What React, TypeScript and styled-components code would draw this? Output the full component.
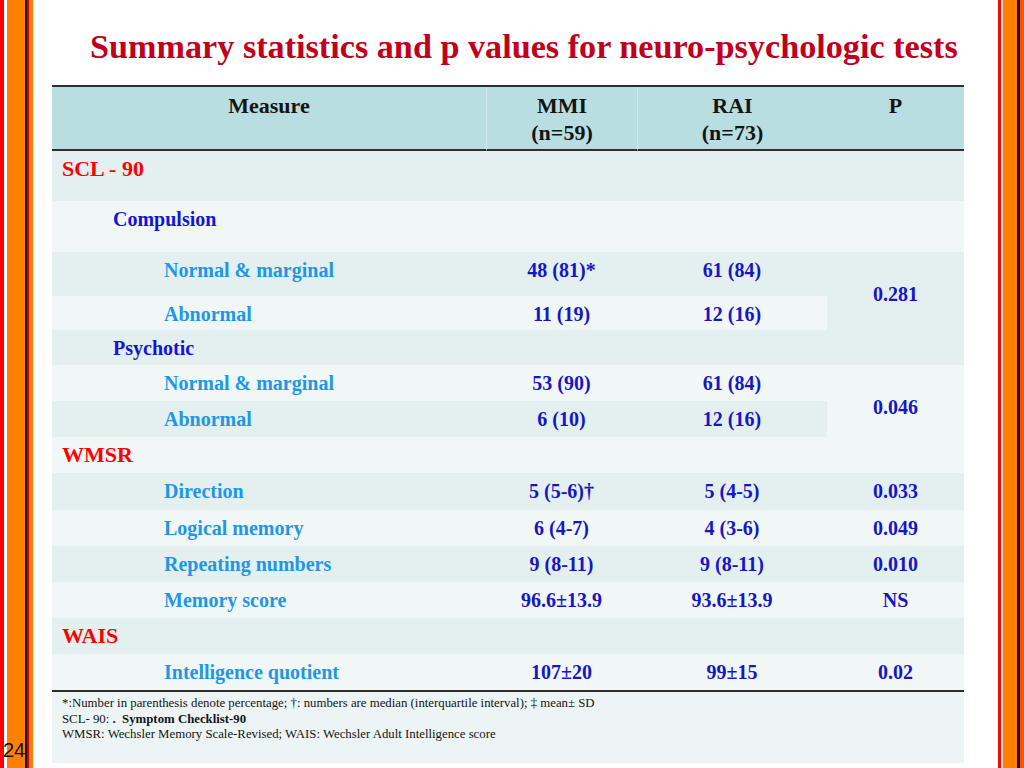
import React from 'react';
import styled, { createGlobalStyle } from 'styled-components';

const Global = createGlobalStyle`
  html, body { margin: 0; padding: 0; background: #ffffff; }
  body { font-family: "Liberation Serif", "Times New Roman", serif; }
  * { box-sizing: border-box; }
`;

const Slide = styled.div`
  position: relative;
  display: flex;
  width: 1024px;
  height: 768px;
  overflow: hidden;
  background: #ffffff;
`;

const LeftBorder = styled.div`
  flex: 0 0 33px;
  background: linear-gradient(
    to right,
    #ff0000 0 4px,
    #ffffff 4px 7px,
    #ff8000 7px 25px,
    #141414 25px 27px,
    #d40000 27px 29px,
    #ff8000 29px 33px
  );
`;

const RightBorder = styled.div`
  flex: 0 0 26px;
  background: linear-gradient(
    to right,
    #e3120b 0 3px,
    #ffd9cf 3px 5px,
    #ff8000 5px 19px,
    #141414 19px 22px,
    #ff5200 22px 26px
  );
`;

const Main = styled.main`
  flex: 1;
  display: flex;
  flex-direction: column;
  padding: 0 34px 0 19px;
`;

const Title = styled.h1`
  margin: 27px 0 0 38px;
  font-size: 34.2px;
  line-height: 40px;
  font-weight: bold;
  color: #c0001c;
  white-space: nowrap;
`;

const Table = styled.div`
  margin-top: 18px;
  display: grid;
  width: 912px;
  grid-template-columns: 434px 151px 190px 137px;
  border-top: 2px solid #2e2e2e;
`;

const HeadCell = styled.div<{ $divider?: boolean }>`
  height: 64px;
  padding-top: 5px;
  background: #b9dee1;
  border-bottom: 2px solid #2e2e2e;
  border-left: ${(p) => (p.$divider ? '1px solid #cfe9eb' : 'none')};
  font-size: 22px;
  line-height: 27px;
  font-weight: bold;
  color: #141414;
  text-align: center;
`;

type Band = 'dark' | 'light';
type Kind = 'section' | 'sub' | 'item';

const bandColor = (b: Band) => (b === 'dark' ? '#e4eff0' : '#f1f6f7');

const kindColor: Record<Kind, string> = {
  section: '#ff0000',
  sub: '#1414d8',
  item: '#1e97e6',
};
const kindIndent: Record<Kind, number> = { section: 10, sub: 61, item: 112 };
const kindSize: Record<Kind, number> = { section: 22, sub: 20, item: 20 };

const LabelCell = styled.div<{ $band: Band; $kind: Kind; $h: number }>`
  height: ${(p) => p.$h}px;
  padding: 6px 0 0 ${(p) => kindIndent[p.$kind]}px;
  background: ${(p) => bandColor(p.$band)};
  color: ${(p) => kindColor[p.$kind]};
  font-size: ${(p) => kindSize[p.$kind]}px;
  line-height: 24px;
  font-weight: bold;
  white-space: nowrap;
`;

const ValueCell = styled.div<{ $band: Band; $span?: number }>`
  grid-row: span ${(p) => p.$span ?? 1};
  padding-top: ${(p) => ((p.$span ?? 1) > 1 ? 30 : 6)}px;
  background: ${(p) => bandColor(p.$band)};
  color: #1616c4;
  font-size: 20px;
  line-height: 24px;
  font-weight: bold;
  text-align: center;
  white-space: nowrap;
`;

const Footer = styled.div`
  grid-column: 1 / -1;
  height: 73px;
  padding: 4px 10px 0;
  background: #edf4f5;
  border-top: 2px solid #2e2e2e;
  font-size: 12.8px;
  line-height: 15.5px;
  color: #141414;
`;

const FootLine = styled.div`
  white-space: nowrap;
`;

const Strong = styled.b`
  font-weight: bold;
`;

const PageNumber = styled.span`
  position: absolute;
  left: 3px;
  top: 739px;
  font-family: "Liberation Sans", Arial, sans-serif;
  font-size: 20px;
  line-height: 22px;
  color: #111111;
`;

type Row = {
  label: string;
  kind: Kind;
  band: Band;
  h: number;
  mmi?: string;
  rai?: string;
  p?: string;
  pSpan?: number;
  pBand?: Band;
  pCovered?: boolean;
};

const rows: Row[] = [
  { label: 'SCL - 90', kind: 'section', band: 'dark', h: 50 },
  { label: 'Compulsion', kind: 'sub', band: 'light', h: 51 },
  { label: 'Normal & marginal', kind: 'item', band: 'dark', h: 44, mmi: '48 (81)*', rai: '61 (84)', p: '0.281', pSpan: 2, pBand: 'dark' },
  { label: 'Abnormal', kind: 'item', band: 'light', h: 34, mmi: '11 (19)', rai: '12 (16)', pCovered: true },
  { label: 'Psychotic', kind: 'sub', band: 'dark', h: 35 },
  { label: 'Normal & marginal', kind: 'item', band: 'light', h: 36, mmi: '53 (90)', rai: '61 (84)', p: '0.046', pSpan: 2, pBand: 'light' },
  { label: 'Abnormal', kind: 'item', band: 'dark', h: 36, mmi: '6 (10)', rai: '12 (16)', pCovered: true },
  { label: 'WMSR', kind: 'section', band: 'light', h: 36 },
  { label: 'Direction', kind: 'item', band: 'dark', h: 37, mmi: '5 (5-6)†', rai: '5 (4-5)', p: '0.033' },
  { label: 'Logical memory', kind: 'item', band: 'light', h: 36, mmi: '6 (4-7)', rai: '4 (3-6)', p: '0.049' },
  { label: 'Repeating numbers', kind: 'item', band: 'dark', h: 36, mmi: '9 (8-11)', rai: '9 (8-11)', p: '0.010' },
  { label: 'Memory score', kind: 'item', band: 'light', h: 36, mmi: '96.6±13.9', rai: '93.6±13.9', p: 'NS' },
  { label: 'WAIS', kind: 'section', band: 'dark', h: 36 },
  { label: 'Intelligence quotient', kind: 'item', band: 'light', h: 36, mmi: '107±20', rai: '99±15', p: '0.02' },
];

export default function App() {
  return (
    <>
      <Global />
      <Slide>
        <LeftBorder />
        <Main>
          <Title>Summary statistics and p values for neuro-psychologic tests</Title>
          <Table>
            <HeadCell>Measure</HeadCell>
            <HeadCell $divider>
              MMI
              <br />
              (n=59)
            </HeadCell>
            <HeadCell $divider>
              RAI
              <br />
              (n=73)
            </HeadCell>
            <HeadCell>P</HeadCell>
            {rows.map((r, i) => (
              <React.Fragment key={i}>
                <LabelCell $band={r.band} $kind={r.kind} $h={r.h}>
                  {r.label}
                </LabelCell>
                <ValueCell $band={r.band}>{r.mmi ?? ''}</ValueCell>
                <ValueCell $band={r.band}>{r.rai ?? ''}</ValueCell>
                {!r.pCovered && (
                  <ValueCell $band={r.pBand ?? r.band} $span={r.pSpan}>
                    {r.p ?? ''}
                  </ValueCell>
                )}
              </React.Fragment>
            ))}
            <Footer>
              <FootLine>
                *:Number in parenthesis denote percentage; †: numbers are median (interquartile interval); ‡ mean± SD
              </FootLine>
              <FootLine>
                SCL- 90: <Strong>.&nbsp; Symptom Checklist-90</Strong>
              </FootLine>
              <FootLine>WMSR: Wechsler Memory Scale-Revised; WAIS: Wechsler Adult Intelligence score</FootLine>
            </Footer>
          </Table>
        </Main>
        <RightBorder />
        <PageNumber>24</PageNumber>
      </Slide>
    </>
  );
}
